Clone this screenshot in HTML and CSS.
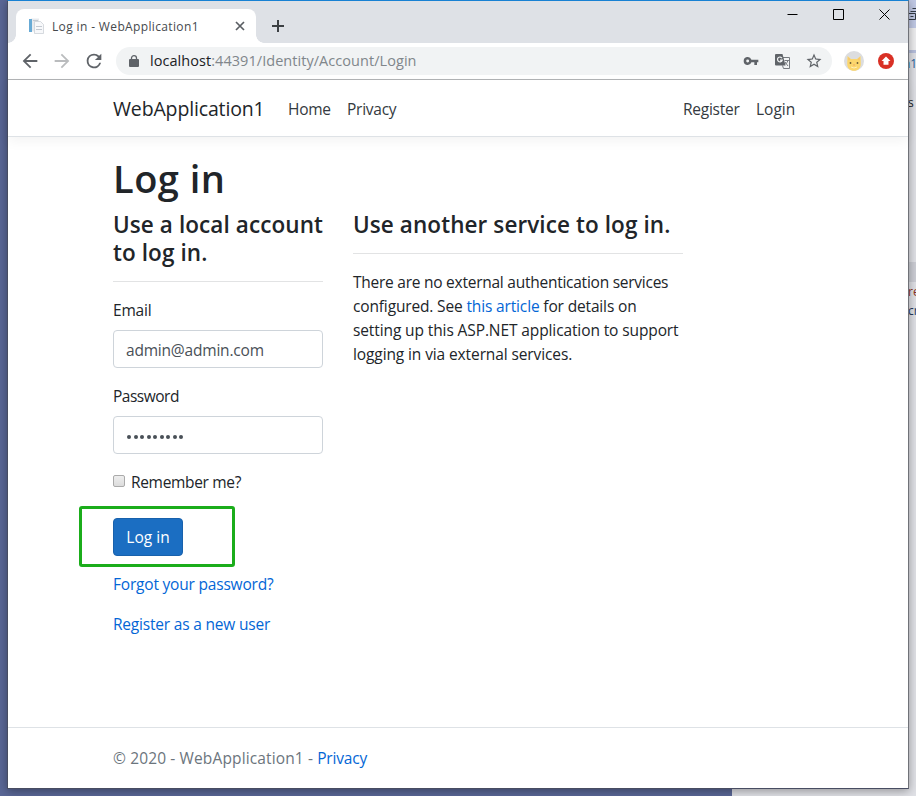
FILE: index.html
```html
<!DOCTYPE html>
<html lang="en">
<head>
<meta charset="utf-8">
<title>Log in - WebApplication1</title>
<link rel="stylesheet" href="styles.css">
</head>
<body>
<div class="desktop">
  <div class="behind" aria-hidden="true">
    <div class="behind-title"><svg width="12" height="12" viewBox="0 0 12 12" fill="none" stroke="#333b45"><path d="M4.500 .5H12M2.500 3.500H12M.5 5.500h7v6h-7zM2.500 8.500h3"/></svg></div>
    <div class="behind-input"></div>
    <div class="behind-body">
      <span class="b1">n1</span><span class="b2">s</span><span class="b3"></span><span class="b4">re</span><span class="b5">cr</span>
    </div>
  </div>
  <div class="window">
    <div class="tabs">
      <div class="tab">
        <svg class="favicon" width="16" height="16" viewBox="0 0 16 16"><path fill="#e7eaee" d="M3 .5h8v13H3z"/><path fill="#67aad5" d="M1 1h3v13H1z"/><path fill="#f7f8fa" stroke="#c5cbd3" stroke-width=".7" d="M6.500 3.500h6l3 3v9h-9z"/><path stroke="#c3c9d1" d="M8 8.500h6M8 11.500h6M5 2.500h5"/></svg>
        <span class="tab-title">Log in - WebApplication1</span>
        <svg class="tab-close" width="10" height="10" viewBox="0 0 10 10" stroke="#5a5e63" stroke-width="1.700"><path d="M1 1l8 8M9 1l-8 8"/></svg>
      </div>
      <svg class="plus" width="12" height="12" viewBox="0 0 12 12" stroke="#3c4043" stroke-width="2"><path d="M6 0v12M0 6h12"/></svg>
      <div class="controls">
        <svg width="11" height="11" viewBox="0 0 11 11" fill="none" stroke="#000"><path d="M.5 5.500h10"/></svg>
        <svg width="11" height="11" viewBox="0 0 11 11" fill="none" stroke="#000"><path d="M.5 .5h10v10H.5z"/></svg>
        <svg width="11" height="11" viewBox="0 0 11 11" fill="none" stroke="#000"><path d="M.5 .5l10 10M10.500 .5l-10 10"/></svg>
      </div>
    </div>
    <div class="toolbar">
      <svg class="back" width="22" height="22" viewBox="0 0 24 24" fill="#5f6368"><path d="M20 11H7.830l5.590-5.590L12 4l-8 8 8 8 1.410-1.410L7.830 13H20v-2z"/></svg>
      <svg class="forward" width="22" height="22" viewBox="0 0 24 24" fill="#babcbe"><path d="M12 4l-1.410 1.410L16.170 11H4v2h12.170l-5.580 5.590L12 20l8-8z"/></svg>
      <svg class="reload" width="22" height="22" viewBox="0 0 24 24" fill="#5f6368"><path d="M17.650 6.350A7.960 7.960 0 0 0 12 4a8 8 0 1 0 7.730 10h-2.080A6 6 0 1 1 12 6c1.660 0 3.140.69 4.220 1.780L13 11h7V4l-2.350 2.350z"/></svg>
      <div class="omnibox">
        <svg class="lock" width="10" height="12" viewBox="0 0 10 12"><path fill="#5f6368" d="M1 4h8q1 0 1 1v6q0 1-1 1H1q-1 0-1-1V5q0-1 1-1z"/><path fill="none" stroke="#5f6368" stroke-width="1.300" d="M2.500 4.500V3a2.500 2.300 0 0 1 5 0v1.500"/></svg>
        <span class="url"><b>localhost</b>:44391/Identity/Account/Login</span>
        <svg class="key" width="16" height="16" viewBox="0 0 24 24" fill="#5f6368"><path d="M12.650 10A6 6 0 0 0 1 12a6 6 0 0 0 11.650 2H17v4h4v-4h2v-4H12.650zM7 14.200a2.200 2.200 0 1 1 0-4.400 2.200 2.200 0 0 1 0 4.400z"/></svg>
        <svg class="translate" width="15" height="15" viewBox="0 0 15 15"><path fill="none" stroke="#777b80" d="M6.500 3.500h8v11h-6l-1-3"/><path fill="#5f6368" d="M1 0h6.500l3 11.500H1q-1 0-1-1V1q0-1 1-1z"/><path fill="none" stroke="#f1f3f4" stroke-width="1.200" d="M7 4.200A2.400 2.400 0 1 0 7.200 6.200H5"/><path fill="none" stroke="#777b80" d="M9.500 6.500H14M13 6.500q-.5 2-3 4M10 8l3 4"/></svg>
        <svg class="star" width="18" height="18" viewBox="0 0 24 24" fill="#5f6368"><path d="M22 9.240l-7.190-.62L12 2 9.190 8.630 2 9.240l5.460 4.730L5.820 21 12 17.270 18.180 21l-1.630-7.030L22 9.240zM12 15.400l-3.760 2.270 1-4.280-3.320-2.880 4.380-.38L12 6.100l1.710 4.040 4.380.38-3.320 2.880 1 4.280L12 15.400z"/></svg>
      </div>
      <svg class="avatar" width="20" height="20" viewBox="0 0 20 20"><circle cx="10" cy="10" r="10" fill="#dcdddf"/><path fill="#fbd66d" d="M3.500 5l3.500 3h6l3.500-3 .3 8c-.1 4-2.800 6.800-6.800 6.800S3.200 17 3.200 13z"/><path fill="#f8c46c" d="M4 6.300l.7 3.500 1.800-1.500zM16 6.300l-.7 3.500-1.800-1.500z"/><circle cx="6.500" cy="12" r=".9" fill="#6b5a35"/><circle cx="13.500" cy="12" r=".9" fill="#6b5a35"/><path fill="#ef9c62" d="M9 13.500h2l-1 1.500z"/><path fill="none" stroke="#fff0b8" d="M7 16q3 2 6 0"/></svg>
      <svg class="update" width="16" height="16" viewBox="0 0 16 16"><circle cx="8" cy="8" r="8" fill="#d93025"/><path fill="#fff" d="M8 3.500L12.500 8H10.500v3.800h-5V8h-2z"/></svg>
    </div>
    <div class="page">
      <nav class="navbar">
        <a class="brand">WebApplication1</a>
        <a class="home">Home</a>
        <a class="privacy">Privacy</a>
        <a class="register">Register</a>
        <a class="login">Login</a>
      </nav>
      <main>
        <h1>Log in</h1>
        <div class="row">
          <section class="local">
            <h4>Use a local account<br>to log in.</h4>
            <hr>
            <label class="lb-email">Email</label>
            <div class="field email">admin@admin.com</div>
            <label class="lb-pass">Password</label>
            <div class="field dots"><i></i><i></i><i></i><i></i><i></i><i></i><i></i><i></i><i></i></div>
            <div class="remember"><span class="check"></span><span>Remember me?</span></div>
            <div class="submit"><a class="btn">Log in</a></div>
            <p><a class="forgot">Forgot your password?</a></p>
            <p><a class="newuser">Register as a new user</a></p>
          </section>
          <section class="external">
            <h4>Use another service to log in.</h4>
            <hr>
            <div class="l1">There are no external authentication services</div>
            <div class="l2">configured. See <a>this article</a> for details on</div>
            <div class="l3">setting up this ASP.NET application to support</div>
            <div class="l4">logging in via external services.</div>
          </section>
        </div>
      </main>
      <footer>© 2020 - WebApplication1 - <a>Privacy</a></footer>
    </div>
  </div>
</div>
</body>
</html>
```
FILE: styles.css
```css
*, *::before, *::after { box-sizing: border-box; }
body { margin: 0; font: 15.5px/24px "Open Sans", "Noto Sans", sans-serif; color: #212529; overflow: hidden; }
svg { display: block; flex: none; }
.desktop { position: relative; width: 916px; height: 796px; background: #5a6796; overflow: hidden; }
.behind { position: absolute; left: 732px; top: 0; width: 184px; height: 796px; background: #e0e1e6; }
.behind-title { height: 28px; background: #c1c9e5; padding: 8px 0 0 176px; }
.behind-input { height: 22px; background: #eeeef0; }
.behind-body { position: relative; height: 746px; border-top: 3px solid #b7bfdc; font-size: 12px; }
.behind-body span { position: absolute; left: 176px; line-height: 16px; }
.behind-body .b1 { top: 3px; left: 171px; color: #29629c; }
.b2 { top: 42px; }
.b3 { top: 209px; width: 8px; height: 20px; background: #ccced5; }
.b4 { top: 231px; color: #8b3427; }
.b5 { top: 250px; color: #253a5e; }
.window { position: absolute; left: 7px; top: 0; width: 902px; height: 789px; border: 1px solid #484d62; border-right-color: #707278; border-top-color: #1881d3; background: #fff; box-shadow: 0 2px 9px rgba(0,0,0,.35); }
.tabs { height: 42px; background: #dee1e6; display: flex; align-items: flex-start; padding: 8px 18px 0 8px; }
.tab { position: relative; width: 240px; height: 34px; background: #fff; border-radius: 8px 8px 0 0; display: flex; align-items: center; padding: 0 11px 0 12px; }
.tab::before, .tab::after { content: ""; position: absolute; bottom: 0; width: 8px; height: 8px; }
.tab::before { left: -8px; background: radial-gradient(circle at 0 0, transparent 7.5px, #fff 8px); }
.tab::after { right: -8px; background: radial-gradient(circle at 100% 0, transparent 7.5px, #fff 8px); }
.tab-title { margin-left: 8px; padding-top: 2px; font-size: 12px; color: #45494d; letter-spacing: .36px; white-space: nowrap; }
.tab-close { margin-left: auto; }
.plus { margin: 11px 0 0 16px; }
.controls { margin: 0 0 0 auto; display: flex; gap: 35px; }
.toolbar { height: 37px; border-bottom: 1px solid #b2b4b6; display: flex; align-items: center; padding: 0 14px 0 11px; }
.forward, .reload { margin-left: 10px; }
.omnibox { width: 716px; height: 28px; margin-left: 11px; border-radius: 14px; background: #f1f3f4; display: flex; align-items: center; padding: 0 9px 0 13px; }
.url { margin-left: 11px; font-size: 14.5px; letter-spacing: .05px; color: #80868b; white-space: nowrap; }
.url b { font-weight: 400; color: #202124; }
.key { margin-left: auto; }
.translate { margin-left: 16px; }
.star { margin-left: 15px; }
.avatar { margin-left: 12px; }
.update { margin-left: 14px; }
.page { display: flex; flex-direction: column; height: 708px; }
a { color: #0366d6; white-space: nowrap; }
.navbar { height: 57px; flex: none; border-bottom: 1px solid #dee2e6; box-shadow: 0 4px 12px rgba(0,0,0,.05); display: flex; align-items: center; padding: 2px 105px 0; letter-spacing: -.25px; }
.navbar a { color: #343a40; }
.navbar .brand { font-size: 19.5px; letter-spacing: -.15px; color: #212529; width: 175px; }
.home { width: 59px; }
.register { margin-left: auto; width: 73px; }
.login { width: 47px; letter-spacing: 0; }
main { flex: 1; padding: 15px 105px 0; }
h1 { margin: 0 0 6px; padding-top: 2px; font-size: 38px; line-height: 48px; letter-spacing: .5px; font-weight: 600; }
.row { display: flex; gap: 30px; }
.local { width: 210px; }
.external { width: 330px; }
h4 { margin: 0 0 14px; padding-top: 3px; font-size: 22.5px; line-height: 28px; letter-spacing: .09px; font-weight: 600; white-space: nowrap; }
hr { margin: 0 0 16px; border: 0; border-top: 1px solid #e2e3e4; }
label { display: block; margin-bottom: 8px; }
.lb-email { letter-spacing: -.2px; }
.lb-pass { letter-spacing: -.5px; }
.field { height: 38px; margin-bottom: 16px; border: 1px solid #ced4da; border-radius: 4px; padding: 2px 12px 0; display: flex; align-items: center; color: #495057; }
.email { letter-spacing: -.2px; }
.dots { gap: 2.500px; padding: 4px 13px 0; }
.dots i { width: 4px; height: 4px; border-radius: 50%; background: #495057; }
.remember { display: flex; height: 24px; letter-spacing: -.33px; }
.check { width: 12px; height: 12px; margin: 5px 6px 0 0; border: 1px solid #aaa; border-radius: 2px; background: linear-gradient(#eee, #dcdcdc); }
.submit { position: relative; margin: 24px 0 16px; height: 38px; }
.submit::before { content: ""; position: absolute; left: -34px; top: -12px; width: 156px; height: 61px; border: 3px solid #1bad1b; border-radius: 3px; }
.btn { position: relative; display: block; width: 70px; height: 38px; border: 1px solid #1861ac; border-radius: 4px; background: #1b6ec2; color: #fff; text-align: center; line-height: 37px; }
p { margin: 0 0 16px; }
.forgot, .newuser { letter-spacing: -.2px; }
.external div { white-space: nowrap; }
.l1 { letter-spacing: -.25px; }
.l2 { letter-spacing: -.15px; }
.l3, .l4 { letter-spacing: -.11px; }
footer { height: 61px; flex: none; border-top: 1px solid #dee2e6; padding-left: 105px; line-height: 61px; color: #6c757d; letter-spacing: .13px; }
footer a { letter-spacing: -.2px; }
```
